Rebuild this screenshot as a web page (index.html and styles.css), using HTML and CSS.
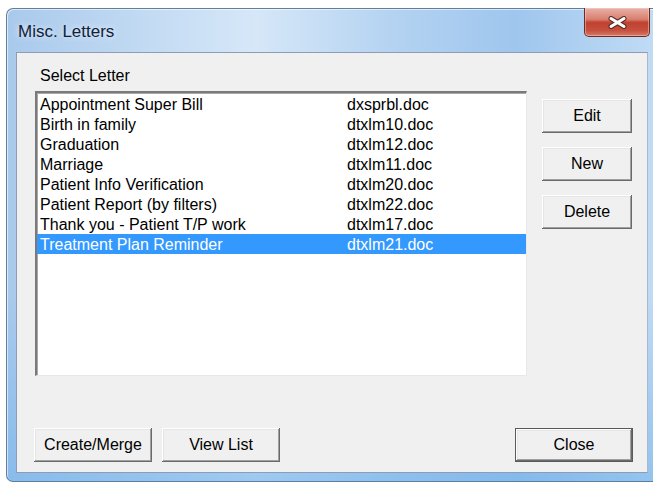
FILE: index.html
```html
<!DOCTYPE html>
<html lang="en">
<head>
<meta charset="utf-8">
<title>Misc. Letters</title>
<link rel="stylesheet" href="styles.css">
</head>
<body>
<div class="window">
  <div class="titlebar">
    <span class="title">Misc. Letters</span>
    <button class="close-x" aria-label="Close">
      <svg width="19" height="13" viewBox="0 0 19 13">
        <path d="M3 2.5 L16 10.5 M16 2.5 L3 10.5" stroke="#5a2a24" stroke-width="5" stroke-linecap="round"/>
        <path d="M3 2.5 L16 10.5 M16 2.5 L3 10.5" stroke="#ffffff" stroke-width="3" stroke-linecap="round"/>
      </svg>
    </button>
  </div>
  <div class="client">
    <div class="main">
      <div class="left">
        <div class="label">Select Letter</div>
        <div class="listbox">
          <div class="row"><span>Appointment Super Bill</span><span>dxsprbl.doc</span></div>
          <div class="row"><span>Birth in family</span><span>dtxlm10.doc</span></div>
          <div class="row"><span>Graduation</span><span>dtxlm12.doc</span></div>
          <div class="row"><span>Marriage</span><span>dtxlm11.doc</span></div>
          <div class="row"><span>Patient Info Verification</span><span>dtxlm20.doc</span></div>
          <div class="row"><span>Patient Report (by filters)</span><span>dtxlm22.doc</span></div>
          <div class="row"><span>Thank you - Patient T/P work</span><span>dtxlm17.doc</span></div>
          <div class="row selected"><span>Treatment Plan Reminder</span><span>dtxlm21.doc</span></div>
        </div>
      </div>
      <div class="side">
        <button class="btn">Edit</button>
        <button class="btn">New</button>
        <button class="btn">Delete</button>
      </div>
    </div>
    <div class="bottom">
      <div class="group">
        <button class="btn wide">Create/Merge</button>
        <button class="btn wide">View List</button>
      </div>
      <button class="btn wide default">Close</button>
    </div>
  </div>
</div>
</body>
</html>
```

FILE: styles.css
```css
html, body {
  margin: 0;
  padding: 0;
  overflow: hidden;
  background: #ffffff;
  width: 653px;
  height: 484px;
}

/* Aero-style frame: horizontal sheen plus a brighter blue toward the bottom */
.window {
  box-sizing: border-box;
  margin: 8px 0 0 6px;
  width: 653px;
  height: 474px;
  padding: 0 0 8px 9px;
  border: 1px solid #5f7f9f;
  border-right: none;
  border-radius: 7px 0 0 7px;
  background:
    linear-gradient(to bottom, rgba(255, 255, 255, 0) 0%, rgba(255, 255, 255, 0) 60%, rgba(110, 175, 235, 0.55) 100%),
    linear-gradient(to right, #a9c9ec 0%, #c3dbf3 22%, #d6e7f8 38%, #b3d2f1 60%, #9fc6ee 78%, #c2dcf4 100%);
  box-shadow: inset 1px 1px 0 rgba(255, 255, 255, 0.6);
  display: flex;
  flex-direction: column;
}

.titlebar {
  height: 43px;
  display: flex;
  align-items: flex-start;
  justify-content: space-between;
  flex-shrink: 0;
}

.title {
  font-family: "Liberation Sans", Arial, sans-serif;
  font-size: 17px;
  color: #10233a;
  margin: 14px 0 0 2px;
  line-height: 18px;
  text-shadow: 0 0 6px rgba(255, 255, 255, 0.9);
}

.close-x {
  box-sizing: border-box;
  width: 66px;
  height: 29px;
  margin: -1px 9px 0 0;
  padding: 0;
  border: 1px solid #6f2b22;
  border-top: none;
  border-radius: 0 0 5px 5px;
  background: linear-gradient(#e8b2a8 0%, #d8806f 40%, #c0412f 52%, #c6503e 80%, #d77a66 100%);
  box-shadow: inset 0 0 0 1px rgba(255, 220, 210, 0.45);
  display: flex;
  align-items: center;
  justify-content: center;
}

.client {
  box-sizing: border-box;
  flex: 1;
  background: #f0f0f0;
  border: 1px solid #8c9db4;
  border-right-color: #aab8ca;
  width: 632px;
  display: flex;
  flex-direction: column;
  font-family: "Liberation Sans", Arial, sans-serif;
  font-size: 16px;
  color: #000;
}

.main {
  display: flex;
  align-items: flex-start;
}

.left {
  margin-left: 18px;
  padding-top: 14px;
}

.label {
  line-height: 18px;
  padding-left: 5px;
  margin-bottom: 6px;
}

.listbox {
  box-sizing: border-box;
  width: 492px;
  height: 285px;
  background: #ffffff;
  border-style: solid;
  border-width: 2px 1px 1px 2px;
  border-color: #7a7a7a #e8e8e8 #e8e8e8 #7a7a7a;
  box-shadow: inset 1px 1px 0 #a8a8a8;
  padding-top: 1px;
}

.row {
  display: grid;
  grid-template-columns: 307px 1fr;
  height: 20px;
  line-height: 21px;
  padding-left: 3px;
  white-space: nowrap;
}

.row.selected {
  background: #3399ff;
  color: #ffffff;
}

.side {
  margin-left: 15px;
  padding-top: 46px;
  display: flex;
  flex-direction: column;
  gap: 14px;
}

.btn {
  box-sizing: border-box;
  width: 90px;
  height: 34px;
  padding: 0;
  border: none;
  background: #f0f0f0;
  font-family: "Liberation Sans", Arial, sans-serif;
  font-size: 16px;
  color: #000;
  box-shadow:
    inset -1px -1px 0 #6a6a6a,
    inset 1px 1px 0 #ffffff,
    inset -2px -2px 0 #a0a0a0,
    inset 2px 2px 0 #e6e6e6;
}

.btn.wide {
  width: 118px;
}

.btn.default {
  box-shadow:
    inset 0 0 0 1px #5a5a5a,
    inset -2px -2px 0 #6a6a6a,
    inset 2px 2px 0 #ffffff,
    inset -3px -3px 0 #a0a0a0,
    inset 3px 3px 0 #e6e6e6;
}

.bottom {
  margin-top: auto;
  margin-bottom: 10px;
  padding: 0 14px 0 17px;
  display: flex;
  justify-content: space-between;
}

.group {
  display: flex;
  gap: 10px;
}
```
